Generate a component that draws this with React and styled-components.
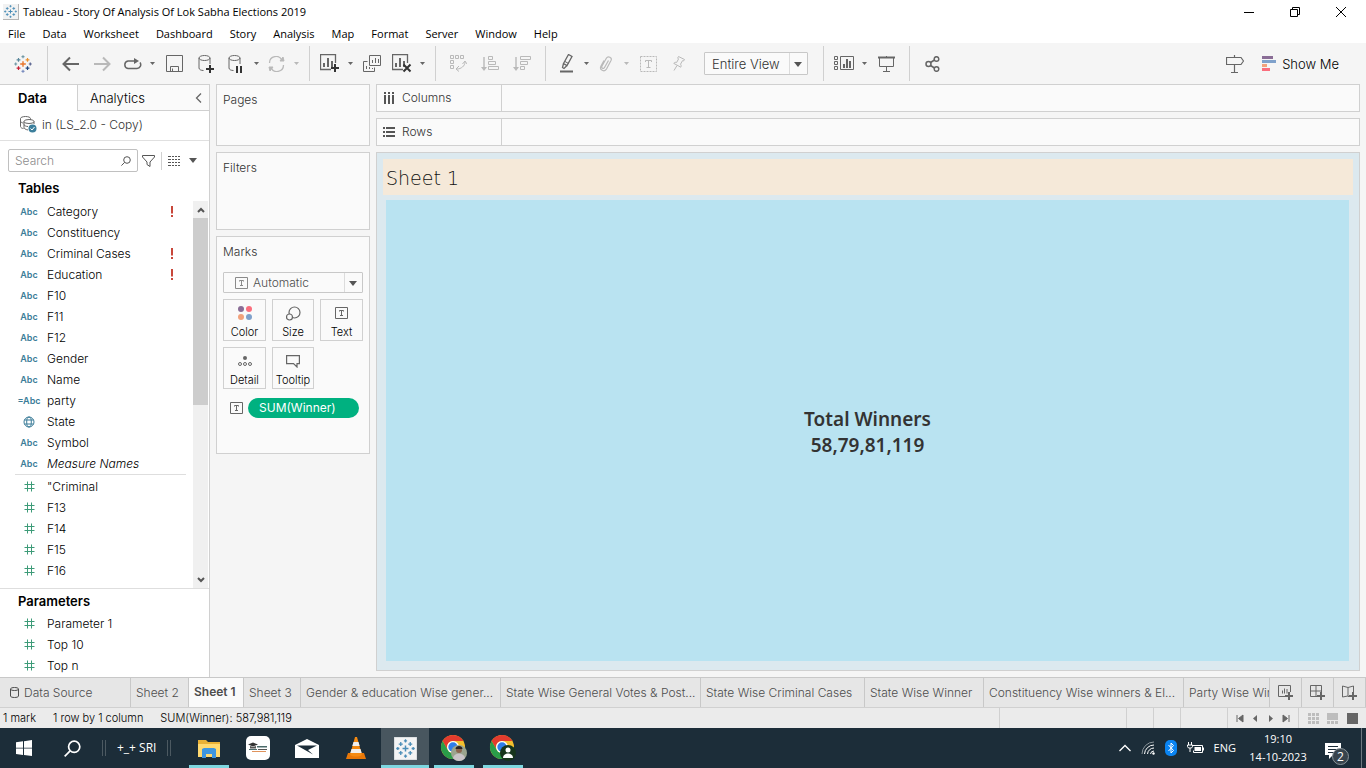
import React from "react";
import styled, { createGlobalStyle, css } from "styled-components";

const UI = `Inter, "Liberation Sans", sans-serif`;
const SYS = `"Open Sans", "Noto Sans", sans-serif`;

const Global = createGlobalStyle`
  *, *::before, *::after { box-sizing: border-box; }
  html, body { margin: 0; padding: 0; }
  body { font-family: ${UI}; font-size: 12px; font-weight: 300; line-height: 16px; color: #000; background: #f5f5f5; }
  button, input, select { font: inherit; color: inherit; margin: 0; }
  button { background: none; border: 0; padding: 0; text-align: inherit; }
  h1, h2, h3, p, ul { margin: 0; padding: 0; font-weight: inherit; font-size: inherit; }
  li { list-style: none; }
  svg { display: block; flex: none; }
`;

const Window = styled.div`
  display: flex;
  flex-direction: column;
  height: 100vh;
  overflow: hidden;
`;

/* ---------- title bar and menus ---------- */
const TitleBar = styled.header`
  display: flex;
  align-items: center;
  height: 23px;
  flex: none;
  background: #fff;
  font: 400 11px/16px ${SYS};
  padding: 0 2px 0 3px;
  color: #000;
  h1 { flex: 1; margin-left: 4px; white-space: nowrap; }
`;
const AppIcon = styled.span`
  padding: 1px;
  background: #f2f2f2;
  border-right: 1px solid #b5b5b5;
  border-bottom: 1px solid #b5b5b5;
`;
const WindowButton = styled.button`
  width: 46px;
  height: 20px;
  display: grid;
  place-items: center;
`;
const MenuBar = styled.nav`
  display: flex;
  align-items: center;
  height: 20px;
  flex: none;
  background: #fff;
  font: 400 11px/16px ${SYS};
  color: #000;
  gap: 17px;
  padding: 2px 8px 0;
`;

/* ---------- toolbar ---------- */
const ToolBar = styled.div`
  display: flex;
  align-items: center;
  height: 41px;
  flex: none;
  background: #f5f5f5;
`;
const ToolGroup = styled.div`
  display: flex;
  align-items: center;
  height: 35px;
  padding: ${(p) => (p.$first ? "0 8px 0 7px" : "0 7px 0 6px")};
  border-left: ${(p) => (p.$first ? "0" : "1px solid #d0d0d0")};
`;
const ToolButton = styled.button`
  display: grid;
  place-items: center;
  width: ${(p) => (p.$split ? 28 : 32)}px;
  height: 28px;
  color: ${(p) => (p.disabled ? "#b9b9b9" : "#666")};
`;
const CaretButton = styled.button`
  display: grid;
  place-items: center;
  width: 12px;
  height: 28px;
  color: ${(p) => (p.disabled ? "#b9b9b9" : "#666")};
`;
const SelectBox = styled.span`
  position: relative;
  display: flex;
  height: ${(p) => (p.$small ? 21 : 23)}px;
  background: #fafafa;
  border: 1px solid #c8c8c8;
  border-radius: 1px;
  color: #333;
  ${(p) => p.$small && css`
    margin-top: 12px;
    color: #4d4d4d;
  `}
  ${(p) => p.$tool && css`
    width: 104px;
    margin: 0 8px 0 12px;
    font-size: 13px;
  `}
  select {
    appearance: none;
    flex: 1;
    min-width: 0;
    border: 0;
    background: transparent;
    padding: 0 0 0 ${(p) => (p.$small ? 29 : 7)}px;
    outline: 0;
  }
  > svg:last-child {
    position: absolute;
    right: 5px;
    top: ${(p) => (p.$small ? 8 : 9)}px;
    color: #555;
    pointer-events: none;
  }
  &::after {
    content: "";
    position: absolute;
    right: 17px;
    top: 0;
    bottom: 0;
    border-left: 1px solid #dcdcdc;
  }
`;
const SelectIcon = styled.span`
  position: absolute;
  left: 11px;
  top: 4px;
  color: #8a8a8a;
  pointer-events: none;
`;
const ShowMe = styled.button`
  display: flex;
  align-items: center;
  gap: 6px;
  margin: 0 27px 0 11px;
  font-size: 13px;
  white-space: nowrap;
`;
const Spacer = styled.span`
  flex: 1;
`;

/* ---------- workspace ---------- */
const Workspace = styled.main`
  display: flex;
  flex: 1;
  min-height: 0;
`;
const DataPane = styled.aside`
  display: flex;
  flex-direction: column;
  width: 210px;
  flex: none;
  background: #fff;
  border-top: 1px solid #d0d0d0;
  border-right: 1px solid #d0d0d0;
  overflow: hidden;
`;
const PaneTabs = styled.div`
  display: flex;
  height: 26px;
  flex: none;
  font-size: 13px;
`;
const PaneTab = styled.button`
  ${(p) => p.$active
    ? css`
        width: 77px;
        padding-left: 18px;
        font-weight: 600;
      `
    : css`
        flex: 1;
        display: flex;
        align-items: center;
        justify-content: space-between;
        padding: 0 7px 0 12px;
        background: #fafafa;
        border-left: 1px solid #d0d0d0;
        border-bottom: 1px solid #d0d0d0;
      `}
  svg { color: #666; }
`;
const Source = styled.div`
  display: flex;
  align-items: center;
  gap: 5px;
  height: 30px;
  flex: none;
  padding: 0 0 2px 20px;
  border-bottom: 1px solid #e0e0e0;
  color: #333;
  svg { color: #666; }
`;
const SearchRow = styled.div`
  display: flex;
  align-items: center;
  height: 23px;
  flex: none;
  margin: 8px 8px 0 8px;
  color: #555;
`;
const SearchBox = styled.label`
  display: flex;
  align-items: center;
  width: 130px;
  height: 23px;
  border: 1px solid #c0c0c0;
  border-radius: 2px;
  padding: 0 6px;
  margin-right: 4px;
  input { flex: 1; min-width: 0; border: 0; padding: 0; outline: 0; background: none; }
  input::placeholder { color: #8c8c8c; opacity: 1; }
`;
const ViewToggle = styled.button`
  display: flex;
  align-items: center;
  gap: 9px;
  height: 18px;
  margin-left: 6px;
  padding-left: 6px;
  border-left: 1px solid #d0d0d0;
`;
const Heading = styled.h2`
  padding: ${(p) => (p.$tight ? 0 : 4)}px 0 0 18px;
  font-size: 13px;
  line-height: 24px;
  flex: none;
  font-weight: 600;
`;
const FieldArea = styled.div`
  display: flex;
  flex: 1;
  min-height: 0;
  margin-top: 1px;
`;
const FieldList = styled.ul`
  flex: 1;
  min-width: 0;
  overflow: hidden;
`;
const FieldRow = styled.li`
  display: flex;
  align-items: center;
  height: 21px;
  padding: 0 19px 0 16px;
  font-style: ${(p) => (p.$italic ? "italic" : "normal")};
`;
const FieldName = styled.span`
  flex: 1;
  margin-left: 5px;
`;
const TypeMark = styled.span`
  display: flex;
  justify-content: center;
  width: 26px;
  font: 600 9px/16px ${UI};
  color: ${(p) => (p.$measure ? "#3d9b78" : "#3c7d99")};
`;
const Warning = styled.span`
  color: #c8473a;
`;
const FieldDivider = styled.li`
  height: 1px;
  margin: 0 7px 1px 15px;
  background: #dedede;
`;
const ScrollBar = styled.div`
  display: flex;
  flex-direction: column;
  align-items: center;
  width: 16px;
  background: #f0f0f0;
  border-right: 1px solid #fff;
  color: #555;
`;
const ScrollButton = styled.button`
  display: grid;
  place-items: center;
  width: 15px;
  height: 17px;
  flex: none;
`;
const ScrollTrack = styled.div`
  flex: 1;
`;
const ScrollThumb = styled.div`
  width: 15px;
  height: 53%;
  background: #cdcdcd;
`;
const Parameters = styled.section`
  height: 89px;
  flex: none;
  border-top: 1px solid #dedede;
  overflow: hidden;
`;

const Shelves = styled.div`
  display: flex;
  flex-direction: column;
  gap: 6px;
  width: 154px;
  flex: none;
  margin: 0 6px;
`;
const Card = styled.section`
  height: ${(p) => p.$h}px;
  flex: none;
  padding: 7px 6px;
  background: #fafafa;
  border: 1px solid #d0d0d0;
  color: #333;
`;
const MarkTypes = styled.div`
  display: grid;
  grid-template-columns: 43px 42px 43px;
  gap: 6px;
  margin-top: 6px;
`;
const MarkButton = styled.button`
  display: flex;
  flex-direction: column;
  align-items: center;
  justify-content: space-between;
  height: 42px;
  padding-top: 4px;
  border: 1px solid #d0d0d0;
  font-size: 11px;
  color: #000;
  white-space: nowrap;
  > span { height: 18px; display: grid; place-items: center; color: #666; }
`;
const PillRow = styled.div`
  display: flex;
  align-items: center;
  gap: 5px;
  margin: 9px 4px 0 7px;
  color: #666;
`;
const Pill = styled.button`
  flex: 1;
  height: 20px;
  padding-left: 11px;
  border-radius: 10px;
  background: #00b180;
  color: #fff;
  font-weight: 400;
`;

const ViewColumn = styled.div`
  display: flex;
  flex-direction: column;
  flex: 1;
  min-width: 0;
  gap: 6px;
  padding: 0 6px 6px 0;
`;
const Shelf = styled.div`
  display: flex;
  height: 28px;
  flex: none;
  background: #fafafa;
  border: 1px solid #d0d0d0;
  color: #333;
`;
const ShelfName = styled.div`
  display: flex;
  align-items: center;
  gap: 6px;
  width: 125px;
  padding-left: 6px;
  border-right: 1px solid #d0d0d0;
  svg { color: #555; }
`;
const Sheet = styled.section`
  flex: 1;
  min-height: 0;
  display: flex;
  flex-direction: column;
  padding: 6px 6px 9px;
  background: #dce9ef;
  border: 1px solid #d0d0d0;
`;
const SheetTitle = styled.h2`
  height: 36px;
  flex: none;
  padding-left: 3px;
  background: #f5e9d9;
  font: 200 19px/38px "DejaVu Sans", "DejaVu Sans Light", sans-serif;
  color: #111;
`;
const Mark = styled.div`
  flex: 1;
  display: flex;
  flex-direction: column;
  align-items: center;
  justify-content: center;
  margin: 5px 4px 0 3px;
  padding-top: 2px;
  background: #b9e3f1;
  font: 600 19px/26px "Noto Sans", sans-serif;
  color: #333;
`;

/* ---------- sheet tabs and status ---------- */
const SheetTabs = styled.nav`
  display: flex;
  height: 31px;
  flex: none;
  background: #e6e6e6;
  border-top: 1px solid #c8c8c8;
  border-bottom: 1px solid #d0d0d0;
  color: #4d4d4d;
`;
const TabStrip = styled.div`
  display: flex;
  flex: 1;
  min-width: 0;
  overflow: hidden;
`;
const SheetTab = styled.button`
  display: flex;
  align-items: center;
  gap: 5px;
  width: ${(p) => p.$w}px;
  flex: none;
  padding: 0 0 0 5px;
  border-right: 1px solid #c8c8c8;
  white-space: nowrap;
  ${(p) => p.$active && css`
    background: #fafafa;
    font-weight: 600;
    padding-bottom: 2px;
  `}
`;
const DataSourceTab = styled(SheetTab)`
  padding-left: 10px;
`;
const NewTabButton = styled.button`
  display: grid;
  place-items: center;
  width: 32px;
  flex: none;
  border-left: 1px solid #c8c8c8;
  color: #666;
  &:last-child { border-right: 1px solid #c8c8c8; width: 33px; }
`;
const StatusBar = styled.footer`
  display: flex;
  height: 20px;
  flex: none;
  background: #ebebeb;
  font-size: 11px;
  line-height: 20px;
`;
const StatusText = styled.div`
  display: flex;
  flex: 1;
  gap: 17px;
  padding-left: 3px;
`;
const StatusCell = styled.div`
  display: flex;
  align-items: center;
  justify-content: space-evenly;
  width: ${(p) => p.$w}px;
  flex: none;
  border-left: 1px solid #d0d0d0;
  color: #666;
`;

/* ---------- taskbar ---------- */
const TaskBar = styled.footer`
  display: flex;
  align-items: center;
  height: 40px;
  flex: none;
  background: #1c2d39;
  color: #fff;
  font: 400 11px/16px ${SYS};
`;
const TaskButton = styled.button`
  display: grid;
  place-items: center;
  position: relative;
  width: 48px;
  height: 40px;
  background: ${(p) => (p.$active ? "#48565f" : "transparent")};
  &::after {
    content: "";
    position: absolute;
    bottom: 0;
    left: ${(p) => (p.$active ? 0 : 4)}px;
    right: ${(p) => (p.$active ? 0 : 4)}px;
    height: 3px;
    background: ${(p) => (p.$open ? "#7ed7e0" : "transparent")};
  }
`;
const DeskBand = styled.div`
  display: flex;
  align-items: center;
  gap: 11px;
  margin: 0 14px 0 6px;
  font-size: 12px;
  white-space: nowrap;
`;
const TaskGrip = styled.span`
  width: 4px;
  height: 16px;
  border: solid #4c5961;
  border-width: 0 1px;
`;
const AppButtons = styled.div`
  display: flex;
  gap: 1px;
`;
const Tray = styled.div`
  display: flex;
  align-items: center;
  gap: 10px;
`;
const Clock = styled.time`
  width: 64px;
  text-align: center;
  line-height: 18px;
`;
const Notice = styled.button`
  position: relative;
  width: 26px;
  height: 28px;
  margin: 0 15px 0 0;
  padding: 5px 0 0 5px;
`;
const Badge = styled.span`
  position: absolute;
  right: -3px;
  bottom: -3px;
  width: 17px;
  height: 17px;
  border-radius: 9px;
  border: 1px solid #8a949a;
  background: #38444d;
  font-size: 12px;
  line-height: 15px;
  text-align: center;
`;
const DesktopEdge = styled.button`
  width: 5px;
  height: 40px;
  border-left: 1px solid #6d7980;
`;

/* ---------- drawings ---------- */
function Icon({ w, h, sw = 1, children }) {
  return (
    <svg width={w} height={h} viewBox={`0 0 ${w} ${h}`} fill="none" stroke="currentColor" strokeWidth={sw} aria-hidden="true">
      {children}
    </svg>
  );
}
const plus = (x, y, r) => `M${x - r} ${y}h${2 * r}M${x} ${y - r}v${2 * r}`;

function Caret() {
  return <Icon w={8} h={5}><path d="M0 0h8L4 5z" fill="currentColor" stroke="none" /></Icon>;
}
function SmallCaret() {
  return <Icon w={5} h={3}><path d="M0 0h5L2.500 3z" fill="currentColor" stroke="none" /></Icon>;
}
function TableauMark({ size, mono }) {
  const c = (a) => (mono ? "#4a8db7" : a);
  return (
    <svg width={size} height={size} viewBox="0 0 18 18" fill="none" strokeWidth="1.200" aria-hidden="true">
      <path d={plus(9, 9, 2.8)} stroke={c("#e8762c")} strokeWidth="1.400" />
      <path d={plus(4.5, 4.8, 1.9)} stroke={c("#59879b")} />
      <path d={plus(13.5, 4.8, 1.9)} stroke={c("#eb912c")} />
      <path d={plus(4.5, 13.2, 1.9)} stroke={c("#c72035")} />
      <path d={plus(13.5, 13.2, 1.9)} stroke={c("#1f457e")} />
      <path d={plus(9, 1.7, 1.5)} stroke={c("#7199a6")} />
      <path d={plus(9, 16.3, 1.5)} stroke={c("#7b8dbf")} />
      <path d={plus(1.7, 9, 1.5)} stroke={c("#7199a6")} />
      <path d={plus(16.3, 9, 1.5)} stroke={c("#5b6591")} />
    </svg>
  );
}
function BackArrow({ flip }) {
  return (
    <Icon w={17} h={16} sw={2}>
      <path d={flip ? "M0 8h15M9 1.500L15.500 8 9 14.500" : "M17 8H2M8 1.500L1.500 8 8 14.500"} />
    </Icon>
  );
}
function Replay() {
  return (
    <Icon w={19} h={12} sw={1.5}>
      <path d="M12 3H5a3.800 3.800 0 0 0 0 7.500h9a3.800 3.800 0 0 0 3-6" />
      <path d="M11 0l5 3-5 3z" fill="currentColor" stroke="none" />
    </Icon>
  );
}
function Save() {
  return <Icon w={17} h={17}><path d="M.5.5h16v16H.5zM4.500 16.500v-5h8v5M6.500 13.500v3" /></Icon>;
}
function Cylinder({ pause }) {
  return (
    <Icon w={18} h={18}>
      <ellipse cx="7.500" cy="3" rx="5.500" ry="2.500" />
      <path d="M2 3v10c0 1.500 2 2.500 4.500 2.500M13 3v6" />
      {pause
        ? <path d="M10 11v7M14 11v7" stroke="#333" strokeWidth="2" />
        : <path d={plus(13, 14, 4)} stroke="#333" strokeWidth="2" />}
    </Icon>
  );
}
function Refresh() {
  return (
    <Icon w={17} h={16}>
      <path d="M1.500 7A6.500 6.500 0 0 1 14 4.500M15.500 9A6.500 6.500 0 0 1 3 11.500" strokeWidth="1.300" />
      <path d="M12 5h4l-1-4zM5 11H1l1 4z" fill="currentColor" />
    </Icon>
  );
}
function ChartSheet({ kind }) {
  return (
    <Icon w={20} h={19}>
      <path d="M11 15.500H.500V.500h15V9" strokeWidth="1.300" />
      <path d="M4 13V9M8 13V4M12 13V7" strokeWidth="2" />
      {kind === "add"
        ? <path d={plus(15, 14, 4)} stroke="#333" strokeWidth="2" />
        : <path d="M11.500 10.500l7 7M18.500 10.500l-7 7" stroke="#333" strokeWidth="2" />}
    </Icon>
  );
}
function Duplicate() {
  return (
    <Icon w={18} h={17}>
      <path d="M6.500.500h11v10h-11zM4.500 6.500h-4v10h11v-4" />
      <path d="M9.500 8V5M12.500 8V3M15.500 8V4M3.500 14v-3M6.500 14v-2M9.500 14v-1" />
    </Icon>
  );
}
function Swap() {
  return (
    <Icon w={17} h={17}>
      <path d="M.500.500h3v3h-3zM5.500.500h3v3h-3zM10.500.500h3v3h-3zM.500 5.500h3v3h-3zM.500 10.500h3v3h-3z" />
      <path d="M7 14c4 0 8-3 8-7M12.500 9L15 6l2 3M9 11l-3 3 3 2.500" />
    </Icon>
  );
}
function Sort({ desc }) {
  return (
    <Icon w={18} h={16}>
      <path d="M3 1v12" strokeWidth="1.400" />
      <path d="M0 11h6l-3 4z" fill="currentColor" stroke="none" />
      <path d={desc ? "M7.500.500h10v3h-10zM7.500 5.500h7v3h-7zM7.500 10.500h4v3h-4z" : "M7.500.500h4v3h-4zM7.500 5.500h7v3h-7zM7.500 10.500h10v3h-10z"} />
    </Icon>
  );
}
function Highlighter() {
  return (
    <Icon w={13} h={19}>
      <path d="M3.500 9.500L8.500.500l3.500 2-5 9zM3.500 9.500l-1 4 1.500 1 3-3" strokeWidth="1.300" />
      <path d="M5 7.500l3.500 2" />
      <path d="M0 17.500h13" strokeWidth="2" />
    </Icon>
  );
}
function Clip() {
  return (
    <Icon w={14} h={16}>
      <path d="M9.500 4.500l-4 7c-1 2-3.500.500-2.500-1.500l4.500-8c1.500-2.500 6-.500 4.500 2.500l-4.500 8.500c-2 3.500-7.500 1-5.500-3L5 4.500" strokeWidth="1.200" />
    </Icon>
  );
}
function DashedText() {
  return (
    <Icon w={17} h={16}>
      <path d="M.5.5h16v15H.5z" strokeDasharray="2 1" />
      <path d="M5.500 6V4.500h6V6M8.500 4.500v7M6.500 11.500h4" />
    </Icon>
  );
}
function Pin() {
  return (
    <Icon w={13} h={15}>
      <path d="M6.500.500l6 3-1 1.500-1-.300-2 3.500c.800 1 .800 2 .300 3l-7-3.800c.600-1 1.700-1.300 2.900-1L6.500 3l-.800-1zM5 9.500L2 14.500" />
    </Icon>
  );
}
function ShowHide() {
  return (
    <Icon w={20} h={15}>
      <path d="M.500.500h3v3h-3zM.500 5.500h3v3h-3zM.500 10.500h3v3h-3zM6.500.500h13v13h-13z" />
      <path d="M10 12V8M13 12V3M16 12V5" strokeWidth="2" />
    </Icon>
  );
}
function Present() {
  return (
    <Icon w={17} h={16}>
      <path d="M0 1.500h17" strokeWidth="2" />
      <path d="M1.500 2v8.500h14V2M8.500 11v4M5 15.500h7M8.500 0v2" />
    </Icon>
  );
}
function Share() {
  return (
    <Icon w={15} h={16} sw={1.5}>
      <circle cx="3.500" cy="8" r="2.500" /><circle cx="11.500" cy="3" r="2.300" /><circle cx="11.500" cy="13" r="2.300" />
      <path d="M5.500 6.500l4-2.500M5.500 9.500l4 2.500" />
    </Icon>
  );
}
function Signpost() {
  return (
    <Icon w={18} h={18}>
      <path d="M.500 2.500h14.500l2.500 3.500-2.500 3.500H.500zM8.500 0v2.500M8.500 10v7M5 17.500h7" strokeWidth="1.200" />
    </Icon>
  );
}
function TextIcon() {
  return (
    <Icon w={13} h={12}>
      <path d="M.5.5h12v11H.5z" />
      <path d="M4.500 4.500v-1h4v1M6.500 3.500v5M5 8.500h3" />
    </Icon>
  );
}
function DatabaseCheck() {
  return (
    <Icon w={17} h={17}>
      <path d="M10.500 4V2.500c0-1-2-2-5-2s-5 1-5 2v8c0 1 1.500 2 3 2M.500 5c0 1 1.500 2 3 2" />
      <ellipse cx="9" cy="5.500" rx="5" ry="2" />
      <path d="M4 5.500v6c0 1 1.500 2 4 2.500M14 5.500V8M4 8.500c0 1 2 2 4 2" />
      <circle cx="12.500" cy="12.500" r="4" fill="#3c7f9c" stroke="none" />
      <path d="M10.500 12.500l1.500 1.500 2.500-3" stroke="#fff" />
    </Icon>
  );
}
function Magnifier({ size = 10 }) {
  return (
    <svg width={size} height={size} viewBox="0 0 10 10" fill="none" stroke="currentColor" aria-hidden="true">
      <circle cx="6" cy="4" r="3.300" /><path d="M3.600 6.400L.4 9.600" />
    </svg>
  );
}
function Chevron({ d, w = 8, h = 8, sw = 1.5 }) {
  return <Icon w={w} h={h} sw={sw}><path d={d} /></Icon>;
}
function Globe() {
  return (
    <Icon w={12} h={12}>
      <circle cx="6" cy="6" r="5" /><ellipse cx="6" cy="6" rx="2.300" ry="5" /><path d="M1.500 4h9M1.500 8h9" />
    </Icon>
  );
}
function Hash() {
  return <Icon w={11} h={11}><path d="M3.500.500v10M7.500.500v10M.500 3.500h10M.500 7.500h10" /></Icon>;
}
function Chrome({ children }) {
  return (
    <svg width="28" height="28" viewBox="0 0 28 28" aria-hidden="true">
      <circle cx="13" cy="13" r="12" fill="#f5c02e" />
      <path d="M2.600 7A12 12 0 0 1 23.400 7H13a6 6 0 0 0-5.200 9z" fill="#e33b2e" />
      <path d="M2.600 7A12 12 0 0 0 13 25l5.200-9A6 6 0 0 1 7.800 16z" fill="#2a9d49" />
      <circle cx="13" cy="13" r="6" fill="#fff" /><circle cx="13" cy="13" r="4.700" fill="#2f7de9" />
      {children}
    </svg>
  );
}

/* ---------- data ---------- */
const dimensions = [
  { name: "Category", warn: true },
  { name: "Constituency" },
  { name: "Criminal Cases", warn: true },
  { name: "Education", warn: true },
  { name: "F10" },
  { name: "F11" },
  { name: "F12" },
  { name: "Gender" },
  { name: "Name" },
  { name: "party", mark: "=Abc" },
  { name: "State", mark: <Globe /> },
  { name: "Symbol" },
  { name: "Measure Names", italic: true },
];
const measures = ["\"Criminal", "F13", "F14", "F15", "F16"];
const parameters = ["Parameter 1", "Top 10", "Top n"];
const menus = ["File", "Data", "Worksheet", "Dashboard", "Story", "Analysis", "Map", "Format", "Server", "Window", "Help"];
const sheets = [
  { name: "Sheet 2", w: 58 },
  { name: "Sheet 1", w: 55, active: true },
  { name: "Sheet 3", w: 57 },
  { name: "Gender & education Wise gener...", w: 200 },
  { name: "State Wise General Votes & Post...", w: 200 },
  { name: "State Wise Criminal Cases", w: 164 },
  { name: "State Wise Winner", w: 119 },
  { name: "Constituency Wise winners & El...", w: 200 },
  { name: "Party Wise Winners", w: 150 },
];

function Field({ name, mark = "Abc", warn, italic, measure }) {
  return (
    <FieldRow $italic={italic}>
      <TypeMark $measure={measure}>{measure ? <Hash /> : mark}</TypeMark>
      <FieldName>{name}</FieldName>
      {warn && <Warning><Icon w={4} h={11} sw={2}><path d="M2 0v7.500M2 9v2" /></Icon></Warning>}
    </FieldRow>
  );
}
function Tool({ label, caret, disabled, children }) {
  return (
    <>
      <ToolButton $split={caret} disabled={disabled} aria-label={label}>{children}</ToolButton>
      {caret && <CaretButton disabled={disabled} aria-label={`${label} options`}><SmallCaret /></CaretButton>}
    </>
  );
}

export default function App() {
  return (
    <Window>
      <Global />
      <TitleBar>
        <AppIcon><TableauMark size={13} mono /></AppIcon>
        <h1>Tableau - Story Of Analysis Of Lok Sabha Elections 2019</h1>
        <WindowButton aria-label="Minimize"><Icon w={10} h={10}><path d="M0 5.500h10" stroke="#000" /></Icon></WindowButton>
        <WindowButton aria-label="Restore"><Icon w={10} h={10}><path d="M.500 2.500h7v7h-7zM2.500 2.500v-2h7v7h-2" stroke="#000" /></Icon></WindowButton>
        <WindowButton aria-label="Close"><Icon w={10} h={10}><path d="M0 0l10 10M10 0L0 10" stroke="#000" /></Icon></WindowButton>
      </TitleBar>
      <MenuBar>{menus.map((m) => <button key={m}>{m}</button>)}</MenuBar>

      <ToolBar>
        <ToolGroup $first><Tool label="Start page"><TableauMark size={18} /></Tool></ToolGroup>
        <ToolGroup>
          <Tool label="Undo"><BackArrow /></Tool>
          <Tool label="Redo" disabled><BackArrow flip /></Tool>
          <Tool label="Replay" caret><Replay /></Tool>
          <Tool label="Save"><Save /></Tool>
          <Tool label="New data source"><Cylinder /></Tool>
          <Tool label="Pause updates" caret><Cylinder pause /></Tool>
          <Tool label="Run update" caret disabled><Refresh /></Tool>
        </ToolGroup>
        <ToolGroup>
          <Tool label="New worksheet" caret><ChartSheet kind="add" /></Tool>
          <Tool label="Duplicate"><Duplicate /></Tool>
          <Tool label="Clear sheet" caret><ChartSheet kind="clear" /></Tool>
        </ToolGroup>
        <ToolGroup>
          <Tool label="Swap rows and columns" disabled><Swap /></Tool>
          <Tool label="Sort ascending" disabled><Sort /></Tool>
          <Tool label="Sort descending" disabled><Sort desc /></Tool>
        </ToolGroup>
        <ToolGroup>
          <Tool label="Highlight" caret><Highlighter /></Tool>
          <Tool label="Group members" caret disabled><Clip /></Tool>
          <Tool label="Show mark labels" disabled><DashedText /></Tool>
          <ToolButton $split disabled aria-label="Fix axes"><Pin /></ToolButton>
          <SelectBox $tool>
            <select aria-label="Fit"><option>Entire View</option></select>
            <Caret />
          </SelectBox>
        </ToolGroup>
        <ToolGroup>
          <Tool label="Show or hide cards" caret><ShowHide /></Tool>
          <Tool label="Presentation mode"><Present /></Tool>
        </ToolGroup>
        <ToolGroup><Tool label="Share"><Share /></Tool></ToolGroup>
        <Spacer />
        <Tool label="Guide"><Signpost /></Tool>
        <ShowMe>
          <Icon w={14} h={15}>
            <path d="M0 1.500h11" stroke="#8a6d96" strokeWidth="3" />
            <path d="M0 5.500h14" stroke="#7fa1cb" strokeWidth="3" />
            <path d="M0 9.500h5" stroke="#f2a27c" strokeWidth="3" />
            <path d="M0 13.500h8" stroke="#fa6e7d" strokeWidth="3" />
          </Icon>
          Show Me
        </ShowMe>
      </ToolBar>

      <Workspace>
        <DataPane>
          <PaneTabs>
            <PaneTab $active>Data</PaneTab>
            <PaneTab>Analytics <Chevron w={7} h={10} sw={1.3} d="M6 .500L1.500 5 6 9.500" /></PaneTab>
          </PaneTabs>
          <Source><DatabaseCheck />in (LS_2.0 - Copy)</Source>
          <SearchRow>
            <SearchBox>
              <input type="text" placeholder="Search" aria-label="Search fields" />
              <Magnifier />
            </SearchBox>
            <button aria-label="Filter fields">
              <Icon w={13} h={12}><path d="M.500.500h12v1.500l-4.500 5v4.500l-3-2V7L.500 2z" /></Icon>
            </button>
            <ViewToggle aria-label="View options">
              <Icon w={12} h={10}>
                <path d="M0 .500h12M0 3.500h12M0 6.500h12M0 9.500h12" strokeDasharray="3 1 2 1 2 1 2 0" />
              </Icon>
              <Caret />
            </ViewToggle>
          </SearchRow>
          <Heading>Tables</Heading>
          <FieldArea>
            <FieldList>
              {dimensions.map((f) => <Field key={f.name} {...f} />)}
              <FieldDivider />
              {measures.map((m) => <Field key={m} name={m} measure />)}
            </FieldList>
            <ScrollBar>
              <ScrollButton aria-label="Scroll up"><Chevron d="M1 6l3-3 3 3" sw={2} /></ScrollButton>
              <ScrollTrack><ScrollThumb /></ScrollTrack>
              <ScrollButton aria-label="Scroll down"><Chevron d="M1 2l3 3 3-3" sw={2} /></ScrollButton>
            </ScrollBar>
          </FieldArea>
          <Parameters>
            <Heading $tight>Parameters</Heading>
            <ul>{parameters.map((p) => <Field key={p} name={p} measure />)}</ul>
          </Parameters>
        </DataPane>

        <Shelves>
          <Card $h={62}><h3>Pages</h3></Card>
          <Card $h={78}><h3>Filters</h3></Card>
          <Card $h={218}>
            <h3>Marks</h3>
            <SelectBox $small>
              <SelectIcon><TextIcon /></SelectIcon>
              <select aria-label="Mark type"><option>Automatic</option></select>
              <Caret />
            </SelectBox>
            <MarkTypes>
              <MarkButton>
                <span>
                  <Icon w={14} h={14}>
                    <g stroke="none">
                      <circle cx="3" cy="3" r="3" fill="#8a6d96" /><circle cx="11" cy="3" r="3" fill="#fa6e7d" />
                      <circle cx="3" cy="11" r="3" fill="#f2a27c" /><circle cx="11" cy="11" r="3" fill="#7fa1cb" />
                    </g>
                  </Icon>
                </span>
                Color
              </MarkButton>
              <MarkButton>
                <span><Icon w={15} h={15} sw={1.2}><circle cx="8.500" cy="6.500" r="5.500" /><circle cx="3.500" cy="11" r="3" fill="#fafafa" /></Icon></span>
                Size
              </MarkButton>
              <MarkButton><span><TextIcon /></span>Text</MarkButton>
              <MarkButton>
                <span>
                  <Icon w={14} h={12}>
                    <circle cx="7" cy="3" r="2" fill="currentColor" stroke="none" />
                    <circle cx="2" cy="9" r="1.500" /><circle cx="7" cy="9" r="1.500" /><circle cx="12" cy="9" r="1.500" />
                  </Icon>
                </span>
                Detail
              </MarkButton>
              <MarkButton>
                <span><Icon w={14} h={13} sw={1.2}><path d="M.600.600h12.800v8H11V12L7.500 8.600H.600z" /></Icon></span>
                Tooltip
              </MarkButton>
            </MarkTypes>
            <PillRow><TextIcon /><Pill>SUM(Winner)</Pill></PillRow>
          </Card>
        </Shelves>

        <ViewColumn>
          <Shelf>
            <ShelfName>
              <Icon w={13} h={12} sw={2}><path d="M2 0v2M2 3v9M6 0v2M6 3v9M10 0v2M10 3v9" /></Icon>
              Columns
            </ShelfName>
          </Shelf>
          <Shelf>
            <ShelfName>
              <Icon w={13} h={10} sw={2}><path d="M0 1h2M3 1h9M0 5h2M3 5h9M0 9h2M3 9h9" /></Icon>
              Rows
            </ShelfName>
          </Shelf>
          <Sheet>
            <SheetTitle>Sheet 1</SheetTitle>
            <Mark><span>Total Winners</span><span>58,79,81,119</span></Mark>
          </Sheet>
        </ViewColumn>
      </Workspace>

      <SheetTabs>
        <TabStrip>
          <DataSourceTab $w={131}>
            <Icon w={9} h={11}><path d="M.500 2v7c0 2 8 2 8 0V2c0-2-8-2-8 0zM.500 2c0 2 8 2 8 0" /></Icon>
            Data Source
          </DataSourceTab>
          {sheets.map((s) => (
            <SheetTab key={s.name} $w={s.w} $active={s.active}>{s.name}</SheetTab>
          ))}
        </TabStrip>
        <NewTabButton aria-label="New worksheet">
          <Icon w={16} h={15}>
            <path d="M8 11.500H.500V.500h12V7M4.500 8.500v-3M6.500 8.500v-5M9 8.500V4" /><path d={plus(11, 11, 4)} strokeWidth="2" />
          </Icon>
        </NewTabButton>
        <NewTabButton aria-label="New dashboard">
          <Icon w={16} h={15}>
            <path d="M8 11.500H.500V.500h11V7M.500 6h11M6 .500v11" /><path d={plus(11, 11, 4)} strokeWidth="2" />
          </Icon>
        </NewTabButton>
        <NewTabButton aria-label="New story">
          <Icon w={16} h={15}>
            <path d="M7 12l-1-1-5.500 1V1L6 2.500 11.500 1v6M6 2.500V11" /><path d={plus(11, 11, 4)} strokeWidth="2" />
          </Icon>
        </NewTabButton>
      </SheetTabs>

      <StatusBar>
        <StatusText><span>1 mark</span><span>1 row by 1 column</span><span>SUM(Winner): 587,981,119</span></StatusText>
        <StatusCell $w={127} />
        <StatusCell $w={27} />
        <StatusCell $w={27} />
        <StatusCell $w={47} />
        <StatusCell $w={71}>
          {["M1 1v7M7 1v7L2.500 4.500z", "M6 1v7L2 4.500z", "M2 1v7l4-3.500z", "M7 1v7M1 1v7l4.500-3.500z"].map((d, i) => (
            <button key={d} aria-label={["First", "Previous", "Next", "Last"][i]}>
              <Icon w={8} h={9}><path d={d} fill="currentColor" strokeWidth={i % 3 ? 0 : 1} /></Icon>
            </button>
          ))}
        </StatusCell>
        <StatusCell $w={68}>
          <button aria-label="Show sheet sorter">
            <Icon w={11} h={11}><path d="M0 1.500h11M0 5.500h11M0 9.500h11" stroke="#bdbdbd" strokeWidth="3" strokeDasharray="3 1" /></Icon>
          </button>
          <button aria-label="Show filmstrip">
            <Icon w={11} h={11}>
              <path d="M0 3.500h11" stroke="#bdbdbd" strokeWidth="7" /><path d="M0 9.500h11" stroke="#bdbdbd" strokeWidth="3" strokeDasharray="3 1" />
            </Icon>
          </button>
          <button aria-label="Show tabs"><Icon w={11} h={11}><rect width="11" height="11" fill="#666" stroke="none" /></Icon></button>
        </StatusCell>
      </StatusBar>

      <TaskBar>
        <TaskButton aria-label="Start">
          <Icon w={16} h={16}><path d="M0 2.300L7 1.300v6.400H0zM8 1.200L16 0v7.700H8zM0 8.500h7V15l-7-1zM8 8.500h8V16l-8-1.100z" fill="#fff" stroke="none" /></Icon>
        </TaskButton>
        <TaskButton aria-label="Search"><Magnifier size={17} /></TaskButton>
        <DeskBand><TaskGrip /><span>+_+ SRI</span><TaskGrip /></DeskBand>
        <AppButtons>
          <TaskButton $open aria-label="File Explorer">
            <Icon w={22} h={19}>
              <g stroke="none">
                <path d="M0 1h8l2 2h12v15H0z" fill="#e9b136" /><path d="M0 5h22v13H0z" fill="#ffd970" />
                <path d="M4 19v-9l2-1h10l2 1v9h-4v-4H8v4z" fill="#3d95df" />
              </g>
            </Icon>
          </TaskButton>
          <TaskButton aria-label="Grade">
            <Icon w={24} h={24}>
              <g stroke="none">
                <rect width="24" height="24" rx="5" fill="#fff" />
                <path d="M2 8.500l5-2 5 2-5 2z" fill="#333" /><path d="M4 10v2.500h6V10l-3 1z" fill="#555" />
                <path d="M11 10h10v1.500H11zM3 13h8v1H3z" fill="#4b6b6a" /><path d="M6 15h14v1H6z" fill="#e0935c" /><path d="M12 13h9v1h-9z" fill="#555" />
              </g>
            </Icon>
          </TaskButton>
          <TaskButton aria-label="Mail">
            <Icon w={24} h={19}><path d="M0 6l12-6 12 6v13H0z" fill="#fff" stroke="none" /><path d="M2 6.500h20L13 11l5 4.500L10 11z" fill="#1c2d39" stroke="none" /></Icon>
          </TaskButton>
          <TaskButton aria-label="VLC">
            <Icon w={20} h={22}>
              <g stroke="none">
                <path d="M2 16h16l2 6H0z" fill="#e87708" /><path d="M9 0h2l5 18c-3 2-9 2-12 0z" fill="#f58a12" />
                <path d="M7.500 5h5l1.200 4H6.300zM5.500 12h9l1.200 4H4.300z" fill="#f2efec" />
              </g>
            </Icon>
          </TaskButton>
          <TaskButton $open $active aria-label="Tableau">
            <Icon w={23} h={23}><rect width="23" height="23" fill="#f4f4f4" stroke="#c5cbd0" /><svg x="2" y="2" width="19" height="19"><TableauMark size={19} mono /></svg></Icon>
          </TaskButton>
          <TaskButton $open aria-label="Chrome, personal">
            <Chrome><circle cx="19" cy="19" r="8" fill="#9ba58f" /><circle cx="19" cy="16" r="3" fill="#8d6650" /><path d="M13 24c1-6 11-6 12 0-3 4-9 4-12 0z" fill="#c9c4c8" /><path d="M15.500 15c0-4 7-4 7 0z" fill="#2c2422" /></Chrome>
          </TaskButton>
          <TaskButton $open aria-label="Chrome, guest">
            <Chrome><circle cx="19" cy="19" r="8" fill="#17351c" /><circle cx="19" cy="16" r="2.500" fill="#fff" /><path d="M14 24c0-6 10-6 10 0z" fill="#fff" /></Chrome>
          </TaskButton>
        </AppButtons>
        <Spacer />
        <Tray>
          <button aria-label="Hidden icons"><Chevron w={12} h={8} sw={1.3} d="M.500 7L6 1.500 11.500 7" /></button>
          <Icon w={14} h={14}>
            <path d="M1 13A12 12 0 0 1 13 1" stroke="#8b959b" /><path d="M3.500 13A9.500 9.500 0 0 1 13 4M6.500 13A6.500 6.500 0 0 1 13 7M9.500 13A3.500 3.500 0 0 1 13 10" />
            <circle cx="12.500" cy="12.500" r="1.200" fill="#fff" stroke="none" />
          </Icon>
          <Icon w={12} h={16}><rect width="12" height="16" rx="5" fill="#0a84f2" stroke="none" /><path d="M3.500 5l5 5.500L6 13V3l2.500 2.500-5 5.500" stroke="#fff" /></Icon>
          <Icon w={17} h={12}>
            <path d="M6 3.500h9.500v7h-9v-2" /><path d="M7.500 5h6.500v4H7.500z" fill="#fff" stroke="none" /><path d="M16.500 5.500v3M1.500 0v3M4.500 0v3M.500 3h5v1.500l-1 1.500h-3l-1-1.500zM3 6v4" />
          </Icon>
          <span>ENG</span>
          <Clock>19:10<br />14-10-2023</Clock>
          <Notice aria-label="Notifications">
            <Icon w={16} h={16}><path d="M0 0h16v12H8l-4 4v-4H0z" fill="#fff" stroke="none" /><path d="M3 3.500h10M3 6.500h10M3 9.500h6" stroke="#1c2d39" /></Icon>
            <Badge>2</Badge>
          </Notice>
        </Tray>
        <DesktopEdge aria-label="Show desktop" />
      </TaskBar>
    </Window>
  );
}
